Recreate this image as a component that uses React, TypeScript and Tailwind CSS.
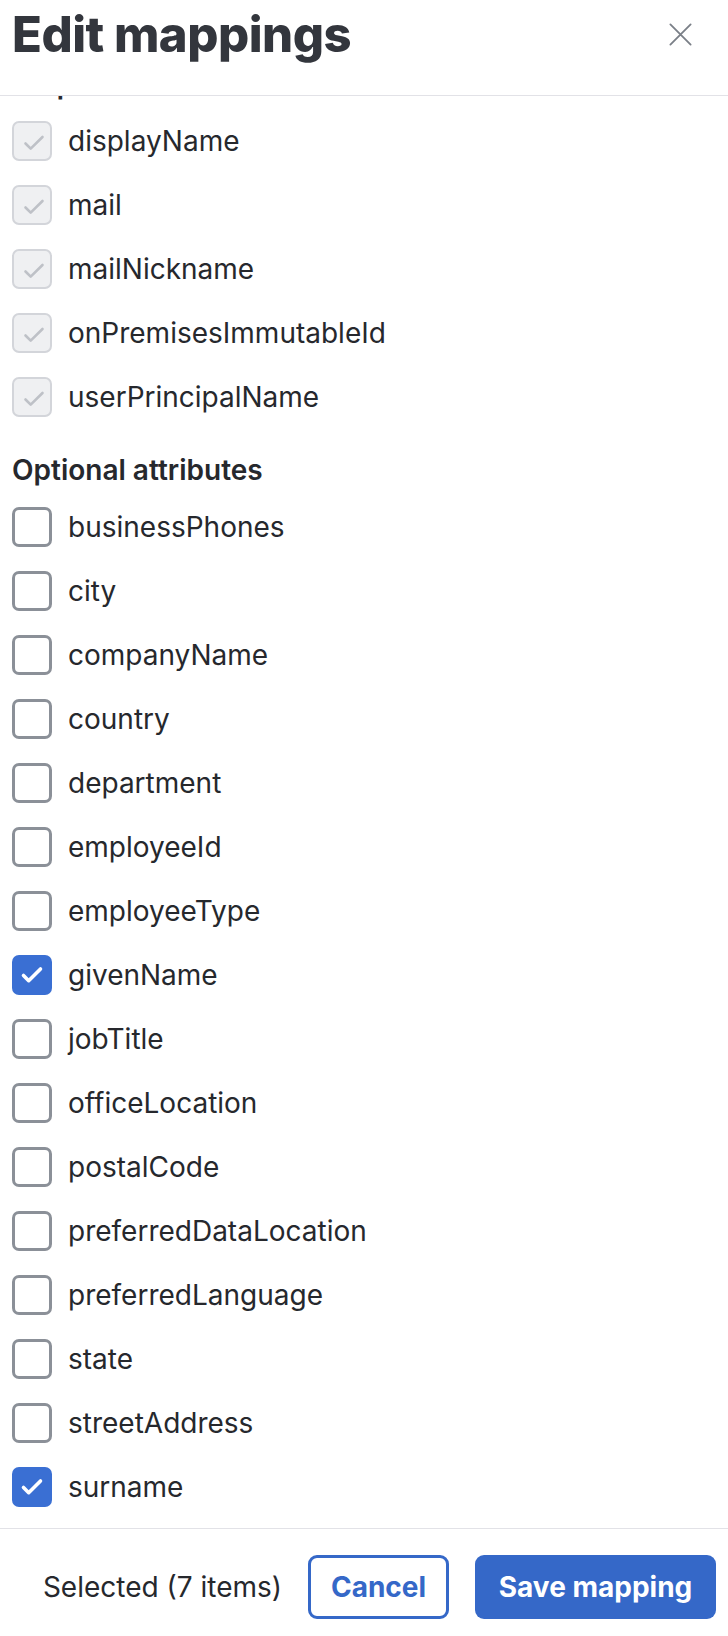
import type { ReactElement } from 'react';

const REQUIRED = ['displayName', 'mail', 'mailNickname', 'onPremisesImmutableId', 'userPrincipalName'];

const OPTIONAL = [
  { name: 'businessPhones', checked: false },
  { name: 'city', checked: false },
  { name: 'companyName', checked: false },
  { name: 'country', checked: false },
  { name: 'department', checked: false },
  { name: 'employeeId', checked: false },
  { name: 'employeeType', checked: false },
  { name: 'givenName', checked: true },
  { name: 'jobTitle', checked: false },
  { name: 'officeLocation', checked: false },
  { name: 'postalCode', checked: false },
  { name: 'preferredDataLocation', checked: false },
  { name: 'preferredLanguage', checked: false },
  { name: 'state', checked: false },
  { name: 'streetAddress', checked: false },
  { name: 'surname', checked: true },
];

type BoxState = 'locked' | 'on' | 'off';

function Check({ color, width }: { color: string; width: number }): ReactElement {
  return (
    <svg viewBox="0 0 40 40" className="h-10 w-10" fill="none" stroke={color} strokeWidth={width} strokeLinecap="round" strokeLinejoin="round">
      <path d="M11.5 20.5l5.2 5.2L28.5 14" />
    </svg>
  );
}

function Box({ state }: { state: BoxState }): ReactElement {
  if (state === 'locked') {
    return (
      <span className="grid h-10 w-10 shrink-0 place-items-center overflow-hidden rounded-[7px] border-[2.5px] border-[#d3d5da] bg-[#eff0f2]">
        <Check color="#bec1c7" width={2.6} />
      </span>
    );
  }
  if (state === 'on') {
    return (
      <span className="grid h-10 w-10 shrink-0 place-items-center rounded-[7px] bg-[#3a6fd3]">
        <Check color="#ffffff" width={3.6} />
      </span>
    );
  }
  return <span className="h-10 w-10 shrink-0 rounded-[7px] border-[3px] border-[#8b9098] bg-white" />;
}

function Row({ label, state }: { label: string; state: BoxState }): ReactElement {
  return (
    <label className="flex items-center gap-4 px-3 py-3">
      <Box state={state} />
      <span className="text-[28px] leading-8 text-[#26282d]">{label}</span>
    </label>
  );
}

export default function App(): ReactElement {
  const selected = REQUIRED.length + OPTIONAL.filter((o) => o.checked).length;
  return (
    <div className="flex h-[1636px] w-[728px] flex-col bg-white font-['Inter',sans-serif]">
      {/* Header */}
      <div className="flex h-[96px] shrink-0 items-start justify-between border-b border-[#e2e2e7] px-3 pt-[8px]">
        <h1 className="text-[49px] font-extrabold leading-[54px] tracking-[-0.5px] text-[#33363d]">Edit mappings</h1>
        <button className="mr-[22px] mt-[13px] text-[#7a7f87]">
          <svg viewBox="0 0 24 24" className="h-[27px] w-[27px]" fill="none" stroke="currentColor" strokeWidth="1.6" strokeLinecap="round">
            <path d="M3 3l18 18M21 3L3 21" />
          </svg>
        </button>
      </div>

      {/* Scrolled list */}
      <div className="min-h-0 flex-1 overflow-hidden">
        <div className="-mt-[53px]">
          <p className="px-3 pb-[9px] pt-[25px] text-[28px] font-semibold leading-8 text-[#26282d]">Required attributes</p>
          {REQUIRED.map((r) => (
            <Row key={r} label={r} state="locked" />
          ))}
          <p className="px-3 pb-[9px] pt-[25px] text-[28px] font-semibold leading-8 text-[#26282d]">Optional attributes</p>
          {OPTIONAL.map((o) => (
            <Row key={o.name} label={o.name} state={o.checked ? 'on' : 'off'} />
          ))}
        </div>
      </div>

      {/* Footer */}
      <div className="flex shrink-0 items-center justify-end gap-[26px] border-t border-[#e2e2e7] px-3 pb-[17px] pt-[26px]">
        <span className="text-[28px] text-[#26282d]">Selected ({selected} items)</span>
        <div className="flex gap-[26px]">
          <button className="h-16 w-[141px] rounded-[9px] border-[3px] border-[#3568c8] text-[28px] font-bold text-[#3568c8]">Cancel</button>
          <button className="h-16 w-[241px] rounded-[9px] bg-[#3568c8] text-[28px] font-bold text-white">Save mapping</button>
        </div>
      </div>
    </div>
  );
}
